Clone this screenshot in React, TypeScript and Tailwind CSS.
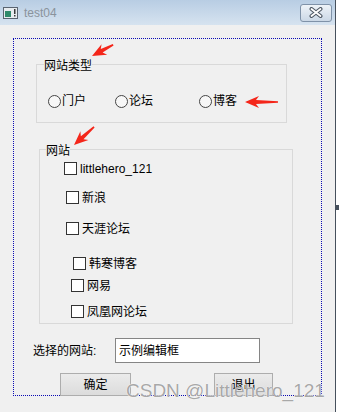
import React from "react";

const arrowPts = (len: number) =>
  `0,0 14,-6 11,-2 ${len},-0.8 ${len},0.8 11,2 14,6`;

function Radio({ label, className }: { label: string; className?: string }) {
  return (
    <div className={`flex items-center ${className ?? ""}`}>
      <span className="h-[13px] w-[13px] rounded-full border border-[#444] bg-[#f7f7f7]" />
      <span className="ml-[1px]">{label}</span>
    </div>
  );
}

function Check({ label, className }: { label: string; className: string }) {
  return (
    <div className={`flex h-[13px] items-center ${className}`}>
      <span className="h-[13px] w-[13px] shrink-0 border border-[#333] bg-white" />
      <span className="ml-[3px] whitespace-nowrap">{label}</span>
    </div>
  );
}

export default function App() {
  return (
    <div className="relative flex h-[412px] w-[339px] overflow-hidden bg-white font-['Liberation_Sans','Noto_Sans_CJK_SC',sans-serif] text-[12px] leading-[16px] text-black">
      <div className="flex h-full w-[336px] flex-col border-r border-[#46505c]">
        {/* title bar */}
        <div className="flex h-[25px] shrink-0 items-center bg-linear-to-b from-[#b8cde3] to-[#d6e3f0]">
          <svg width="15" height="12" viewBox="0 0 15 12" className="ml-[3px]">
            <rect x="0.5" y="0.5" width="14" height="11" fill="#e8ecef" stroke="#5a6470" />
            <rect x="2" y="4" width="6" height="6" fill="#2f8a6a" />
            <rect x="11" y="2" width="1.5" height="5" fill="#3a3a3a" />
            <rect x="11" y="8" width="1.5" height="1.5" fill="#3a3a3a" />
          </svg>
          <span className="ml-[6px] text-[12px] text-[#8a939c]">test04</span>
          <div className="ml-auto mr-[3px] flex h-[18px] w-[32px] items-center justify-center rounded-[3px] border border-[#7f92a8] bg-linear-to-b from-[#eef3f8] to-[#cbd8e6]">
            <svg width="14" height="11" viewBox="0 0 14 11">
              <path d="M2.5 2 L11.5 9 M11.5 2 L2.5 9" stroke="#4e5864" strokeWidth="4" strokeLinecap="round" />
              <path d="M2.5 2 L11.5 9 M11.5 2 L2.5 9" stroke="#ffffff" strokeWidth="1.8" strokeLinecap="round" />
            </svg>
          </div>
        </div>

        {/* body */}
        <div className="flex-1 bg-[#f0f0f0] pl-[13px] pt-[13px]">
          <div className="flex h-[358px] w-[309px] flex-col border border-dotted border-[#0a0ab4]">
            <fieldset className="ml-[22px] mt-[17px] w-[251px] border border-[#d9d9d9] pb-[14px] pl-[7px]">
              <legend className="pt-[4px] leading-[12px]">网站类型</legend>
              <div className="mt-[22px] flex h-[14px] items-center">
                <Radio label="门户" className="ml-[4px] w-[67px]" />
                <Radio label="论坛" className="w-[84px]" />
                <Radio label="博客" />
              </div>
            </fieldset>

            <fieldset className="ml-[25px] mt-[18px] w-[254px] border border-[#d9d9d9] pb-[5px] pl-[6px]">
              <legend className="pt-[4px] leading-[12px]">网站</legend>
              <Check label="littlehero_121" className="ml-[18px] mt-[5px]" />
              <Check label="新浪" className="ml-[20px] mt-[16px]" />
              <Check label="天涯论坛" className="ml-[20px] mt-[18px]" />
              <Check label="韩寒博客" className="ml-[27px] mt-[22px]" />
              <Check label="网易" className="ml-[25px] mt-[9px]" />
              <Check label="凤凰网论坛" className="ml-[25px] mt-[13px]" />
            </fieldset>

            <div className="ml-[19px] mt-[14px] flex h-[25px] items-center">
              <span className="w-[82px]">选择的网站:</span>
              <div className="flex h-[25px] w-[145px] items-center border border-[#858585] bg-white pl-[3px]">
                示例编辑框
              </div>
            </div>

            <div className="ml-[46px] mt-[10px] flex">
              <button className="h-[23px] w-[71px] border border-[#adadad] bg-linear-to-b from-[#ebebeb] to-[#dcdcdc]">
                确定
              </button>
              <button className="ml-[83px] h-[23px] w-[59px] border border-[#adadad] bg-linear-to-b from-[#ebebeb] to-[#dcdcdc]">
                退出
              </button>
            </div>
          </div>
        </div>
      </div>
      <div className="w-[3px]">
        <div className="mt-[205px] h-[5px] w-[3px] bg-[#46505c]" />
      </div>

      {/* annotation arrows */}
      <svg className="pointer-events-none absolute left-0 top-0" width="339" height="412">
        <g fill="#f4261a">
          <polygon points={arrowPts(24)} transform="translate(92 56) rotate(-28)" />
          <polygon points={arrowPts(27)} transform="translate(74 145) rotate(-42)" />
          <polygon points={arrowPts(33)} transform="translate(245 102)" />
        </g>
      </svg>

      {/* watermark */}
      <span className="pointer-events-none absolute left-[126px] top-[381px] whitespace-nowrap font-['Liberation_Sans',sans-serif] text-[19px] leading-[19px] text-[#a8a8a8] [text-shadow:0_0_1px_#fff,0_0_1px_#fff]">
        CSDN @Littlehero_121
      </span>
    </div>
  );
}
